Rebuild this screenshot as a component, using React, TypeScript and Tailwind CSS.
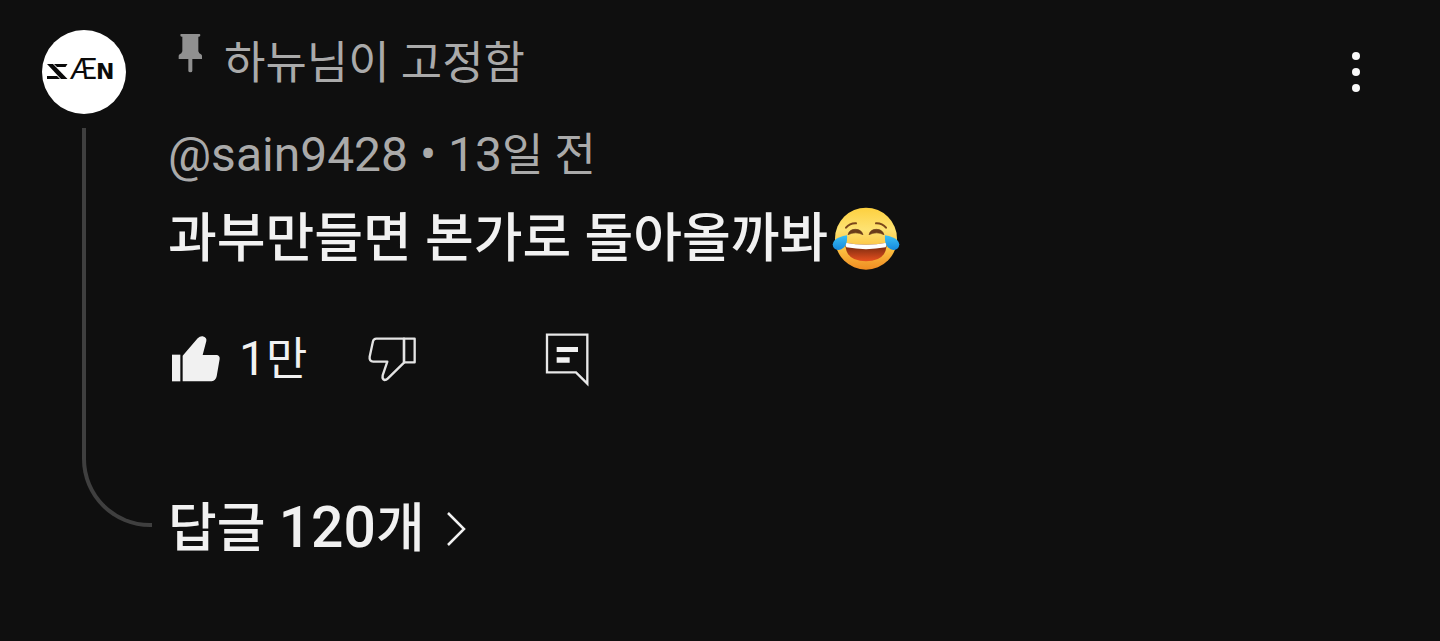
import { useState } from 'react';

function ChannelLogo() {
  return (
    <svg viewBox="0 0 84 84" className="h-full w-full" role="img" aria-label="SÆN">
      <g fill="#0a0a0a">
        <path d="M12 34h13.500l-2 3H15z" />
        <path d="M5 46h10l3 3H5z" />
        <path d="M5 34h6l14.500 15h-6.500z" />
      </g>
      <text x="28" y="49" fontSize="29" fill="#0a0a0a" className="font-['Lato']">
        Æ
      </text>
      <text x="54" y="49" fontSize="22" fontWeight="700" fill="#0a0a0a" className="font-['DejaVu_Sans']">
        N
      </text>
    </svg>
  );
}

function PinIcon() {
  return (
    <svg viewBox="50 38 90 120" className="h-10 w-[30px]" fill="#909090" aria-hidden="true">
      <path d="M65 41h55q3 0 3 4t-4 4h-2v44q2 7 8 9 3 2 3 5v9H99v35q0 5-6 5t-6-5v-35H58v-9q0-3 3-5 6-2 8-9V49h-2q-4 0-4-4t2-4z" />
    </svg>
  );
}

function ThumbUpIcon() {
  return (
    <svg viewBox="32 30 150 150" className="size-[50px]" fill="#f1f1f1" aria-hidden="true">
      <path d="M35 92h25v80H35z" />
      <path d="M67 95L112 43q7-7 15-6 13 3 11 14l-11 42h41q11 1 10 12l-9 52q-3 14-15 15H67z" />
    </svg>
  );
}

function ThumbDownIcon() {
  return (
    <svg viewBox="22 30 150 150" className="size-[50px]" fill="none" stroke="#e4e4e4" strokeWidth="7" strokeLinejoin="round" aria-hidden="true">
      <path d="M133 44H50q-8 0-10 8L30 98q-2 14 11 15h42L69 154q-2 12 6 14 5 0 9-4L133 116z" />
      <path d="M133 44h32v71h-32z" />
    </svg>
  );
}

function ReplyIcon() {
  return (
    <svg viewBox="22 25 150 168" className="h-14 w-[50px]" aria-hidden="true">
      <path d="M37 36H158V183L124 149H37z" fill="none" stroke="#e8e8e8" strokeWidth="7" />
      <path d="M66 73h64v15H66zM66 104h39v16H66z" fill="#f1f1f1" />
    </svg>
  );
}

function JoyEmoji() {
  return (
    <svg viewBox="38 34 204 192" className="h-16 w-[68px]" role="img" aria-label="😂">
      <defs>
        <linearGradient id="face" x1="0" y1="0" x2="0" y2="1">
          <stop offset="0" stopColor="#fdd03f" />
          <stop offset="0.35" stopColor="#fee272" />
          <stop offset="0.65" stopColor="#fcc443" />
          <stop offset="1" stopColor="#ef8b22" />
        </linearGradient>
        <linearGradient id="mouth" x1="0" y1="0" x2="0" y2="1">
          <stop offset="0.2" stopColor="#7d2c10" />
          <stop offset="1" stopColor="#e8501f" />
        </linearGradient>
        <linearGradient id="tear" x1="0" y1="0" x2="0" y2="1">
          <stop offset="0" stopColor="#3cc0f5" />
          <stop offset="1" stopColor="#1689dc" />
        </linearGradient>
      </defs>
      <circle cx="140" cy="129" r="93" fill="url(#face)" />
      <path d="M78 141q62 12 124 0 1 56-62 56t-62-56z" fill="url(#mouth)" />
      <path d="M78 141q62 12 124 0 0 9-3 14-59 11-118 0-3-5-3-14z" fill="#fff" />
      <path d="M86 117q4-16 22-16t23 16q-22-11-45 0zM149 117q4-16 22-16t23 16q-22-11-45 0z" fill="#6b3c1a" stroke="#6b3c1a" strokeWidth="2" strokeLinejoin="round" />
      <path d="M80 96q12-14 30-13M200 96q-12-14-30-13" fill="none" stroke="#7b471b" strokeWidth="6" strokeLinecap="round" />
      <path d="M83 119q2 24-9 36-13 13-28 4-12-12 0-25 12-11 37-15z" fill="url(#tear)" />
      <path d="M197 119q-2 24 9 36 13 13 28 4 12-12 0-25-12-11-37-15z" fill="url(#tear)" />
    </svg>
  );
}

export default function App() {
  const [liked, setLiked] = useState(true);

  return (
    <main className="min-h-screen bg-[#0f0f0f] px-[42px] pt-[30px] pb-20 font-['Roboto','Noto_Sans_CJK_KR',sans-serif] text-[#f1f1f1]">
      <article className="flex gap-4">
        {/* Avatar and the thread line down to the replies */}
        <div className="flex w-[110px] shrink-0 flex-col pb-[34px]">
          <a href="#channel" className="block size-[84px] overflow-hidden rounded-full bg-white">
            <ChannelLogo />
          </a>
          <div className="mt-[14px] ml-10 flex-1 rounded-bl-[68px] border-b-4 border-l-4 border-[#3f3f3f]" />
        </div>

        <div className="min-w-0 flex-1">
          <div className="flex gap-[18px] pt-[3px] pl-2 text-[45px] leading-[62px] text-[#aaaaaa]">
            <PinIcon />
            <span>하뉴님이 고정함</span>
          </div>

          <div className="mt-8 text-[48px] leading-[56px] text-[#aaaaaa]">
            <a href="#author">@sain9428</a> • 13<span className="text-[45px]">일 전</span>
          </div>

          <p className="mt-[19px] flex flex-wrap items-center gap-1 text-[53px] leading-[72px] font-medium">
            과부만들면 본가로 돌아올까봐
            <JoyEmoji />
          </p>

          <div className="mt-14 flex h-14 items-center">
            <button
              type="button"
              aria-label="좋아요"
              aria-pressed={liked}
              onClick={() => setLiked(!liked)}
              className="ml-[3px] flex items-center gap-[18px] text-[48px] leading-[60px]"
            >
              <ThumbUpIcon />
              <span>
                1<span className="text-[45px]">만</span>
              </span>
            </button>
            <button type="button" aria-label="싫어요" className="ml-15">
              <ThumbDownIcon />
            </button>
            <button type="button" aria-label="답글 달기" className="ml-[125px]">
              <ReplyIcon />
            </button>
          </div>

          <button type="button" className="mt-[109px] flex items-center gap-5 text-[53px] leading-[64px] font-medium">
            <span>
              답글 <span className="text-[57px]">120</span>개
            </span>
            <svg viewBox="0 0 22 36" className="h-9 w-[22px]" fill="none" stroke="currentColor" strokeWidth="2.5" aria-hidden="true">
              <path d="M3 2L19 18L3 34" />
            </svg>
          </button>
        </div>

        <button type="button" aria-label="더보기" className="flex size-[84px] shrink-0 items-center justify-center">
          <svg viewBox="0 0 10 42" className="h-[42px] w-[10px]" fill="#f8f8f8" aria-hidden="true">
            <circle cx="5" cy="5" r="4" />
            <circle cx="5" cy="21" r="4" />
            <circle cx="5" cy="37" r="4" />
          </svg>
        </button>
      </article>
    </main>
  );
}
